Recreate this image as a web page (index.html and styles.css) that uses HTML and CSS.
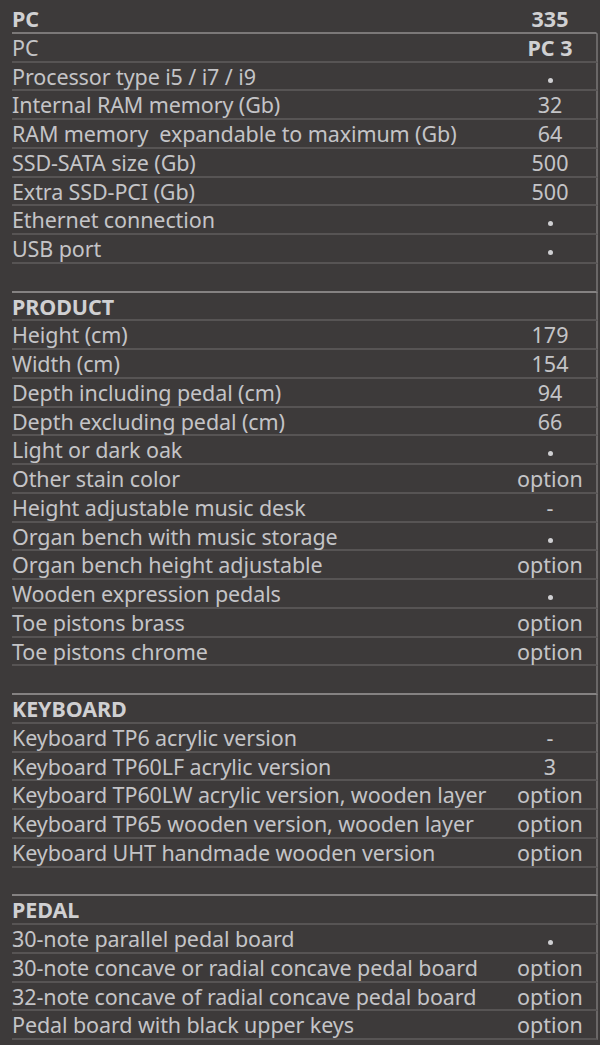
FILE: index.html
```html
<!DOCTYPE html>
<html lang="en">
<head>
<meta charset="utf-8">
<title>Specifications</title>
<link rel="stylesheet" href="styles.css">
</head>
<body>
<div class="sheet">
  <section class="sec first">
    <div class="row head"><div class="label">PC</div><div class="val">335</div></div>
    <div class="row"><div class="label">PC</div><div class="val bold">PC 3</div></div>
    <div class="row"><div class="label">Processor type i5 / i7 / i9</div><div class="val"><span class="dot"></span></div></div>
    <div class="row"><div class="label">Internal RAM memory (Gb)</div><div class="val">32</div></div>
    <div class="row"><div class="label">RAM memory&nbsp; expandable to maximum (Gb)</div><div class="val">64</div></div>
    <div class="row"><div class="label">SSD-SATA size (Gb)</div><div class="val">500</div></div>
    <div class="row"><div class="label">Extra SSD-PCI (Gb)</div><div class="val">500</div></div>
    <div class="row"><div class="label">Ethernet connection</div><div class="val"><span class="dot"></span></div></div>
    <div class="row"><div class="label">USB port</div><div class="val"><span class="dot"></span></div></div>
    <div class="row spacer"><div class="label"></div><div class="val"></div></div>
  </section>
  <section class="sec">
    <div class="row head"><div class="label">PRODUCT</div><div class="val"></div></div>
    <div class="row"><div class="label">Height (cm)</div><div class="val">179</div></div>
    <div class="row"><div class="label">Width (cm)</div><div class="val">154</div></div>
    <div class="row"><div class="label">Depth including pedal (cm)</div><div class="val">94</div></div>
    <div class="row"><div class="label">Depth excluding pedal (cm)</div><div class="val">66</div></div>
    <div class="row"><div class="label">Light or dark oak</div><div class="val"><span class="dot"></span></div></div>
    <div class="row"><div class="label">Other stain color</div><div class="val">option</div></div>
    <div class="row"><div class="label">Height adjustable music desk</div><div class="val">-</div></div>
    <div class="row"><div class="label">Organ bench with music storage</div><div class="val"><span class="dot"></span></div></div>
    <div class="row"><div class="label">Organ bench height adjustable</div><div class="val">option</div></div>
    <div class="row"><div class="label">Wooden expression pedals</div><div class="val"><span class="dot"></span></div></div>
    <div class="row"><div class="label">Toe pistons brass</div><div class="val">option</div></div>
    <div class="row"><div class="label">Toe pistons chrome</div><div class="val">option</div></div>
    <div class="row spacer"><div class="label"></div><div class="val"></div></div>
  </section>
  <section class="sec">
    <div class="row head"><div class="label">KEYBOARD</div><div class="val"></div></div>
    <div class="row"><div class="label">Keyboard TP6 acrylic version</div><div class="val">-</div></div>
    <div class="row"><div class="label">Keyboard TP60LF acrylic version</div><div class="val">3</div></div>
    <div class="row"><div class="label">Keyboard TP60LW acrylic version, wooden layer</div><div class="val">option</div></div>
    <div class="row"><div class="label">Keyboard TP65 wooden version, wooden layer</div><div class="val">option</div></div>
    <div class="row"><div class="label">Keyboard UHT handmade wooden version</div><div class="val">option</div></div>
    <div class="row spacer"><div class="label"></div><div class="val"></div></div>
  </section>
  <section class="sec">
    <div class="row head"><div class="label">PEDAL</div><div class="val"></div></div>
    <div class="row"><div class="label">30-note parallel pedal board</div><div class="val"><span class="dot"></span></div></div>
    <div class="row"><div class="label">30-note concave or radial concave pedal board</div><div class="val">option</div></div>
    <div class="row"><div class="label">32-note concave of radial concave pedal board</div><div class="val">option</div></div>
    <div class="row"><div class="label">Pedal board with black upper keys</div><div class="val">option</div></div>
  </section>
</div>
</body>
</html>
```

FILE: styles.css
```css
html, body {
  margin: 0;
  padding: 0;
  background: #3d3a3a;
}
body {
  font-family: "Noto Sans", "Open Sans", sans-serif;
  font-size: 21.5px;
  color: #c4c4c7;
}
.sheet {
  width: 586px;
  padding: 5px 0 0 12px;
  height: 1040px;
  overflow: hidden;
}
.row {
  display: flex;
  height: 28.75px;
  box-sizing: border-box;
}
.label {
  flex: 1;
  border-bottom: 2px solid #575454;
  line-height: 28px;
  white-space: nowrap;
  letter-spacing: -0.1px;
}
.val {
  width: 92px;
  padding-left: 4px;
  border-bottom: 2px solid #575454;
  border-right: 2px solid #6a6767;
  text-align: center;
  line-height: 28px;
  white-space: nowrap;
}
.first .head .val {
  border-right-color: transparent;
}
.head .label, .head .val, .bold {
  font-weight: 700;
  color: #d0d0d2;
}
.first .head .label, .first .head .val {
  border-bottom-color: #7b7878;
}
.spacer .label, .spacer .val {
  border-bottom: 2px solid #858282;
}
.dot {
  display: inline-block;
  width: 5px;
  height: 5px;
  border-radius: 50%;
  background: #cfcfd2;
  vertical-align: 2px;
}
```
